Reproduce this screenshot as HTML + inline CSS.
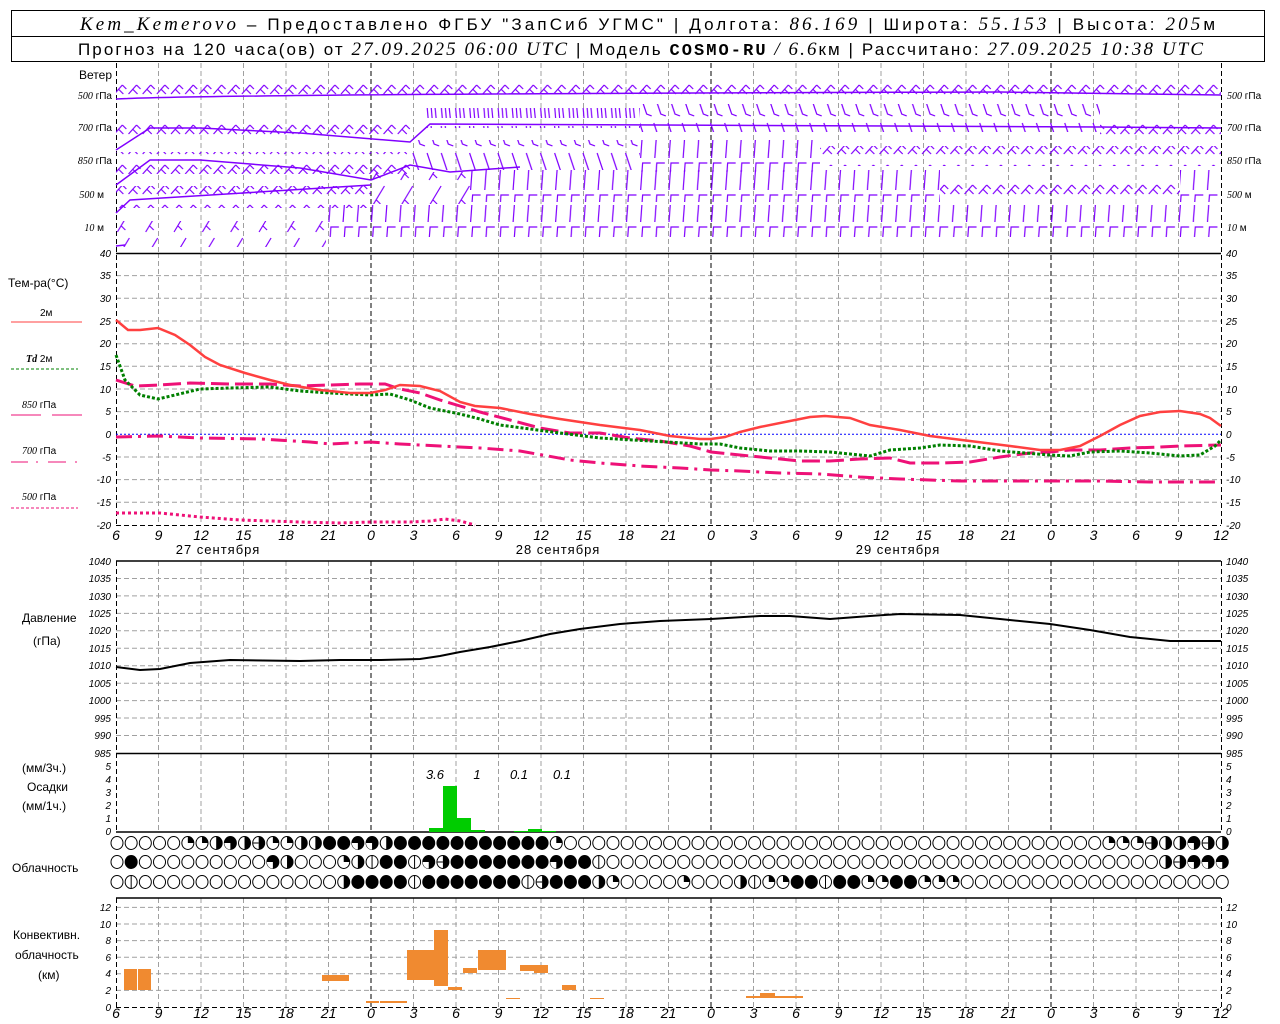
<!DOCTYPE html>
<html><head><meta charset="utf-8"><style>
html,body{margin:0;padding:0;background:#fff;width:1280px;height:1024px;overflow:hidden}
svg{display:block}
text{font-family:"Liberation Sans",sans-serif;fill:#000}
.s{font-size:12px}
.it{font-family:"Liberation Serif",serif;font-style:italic}
.tk{font-size:10px;font-family:"Liberation Serif",serif;font-style:italic}
.ax{font-size:14px;font-family:"Liberation Serif",serif;font-style:italic}
.h{font-size:17px}
</style></head><body>
<svg width="1280" height="1024" viewBox="0 0 1280 1024" xmlns="http://www.w3.org/2000/svg">
<defs>
<pattern id="pz" patternUnits="userSpaceOnUse" width="14.17" height="20" x="0" y="0">
<path d="M1,14 L9,5 M5,9 L10,14 M9,5 L13,9" stroke="#8000ff" stroke-width="1.2" fill="none"/>
</pattern>
<pattern id="pc" patternUnits="userSpaceOnUse" width="14.17" height="20" x="0" y="0">
<path d="M3,18 L2,6 M7,18 L6,6 M11,18 L10,8" stroke="#8000ff" stroke-width="1.2" fill="none"/>
</pattern>
<pattern id="pb" patternUnits="userSpaceOnUse" width="14.17" height="30" x="0" y="0">
<path d="M2,3 L9,24 L14,26" stroke="#8000ff" stroke-width="1.2" fill="none"/>
</pattern>
<pattern id="pg" patternUnits="userSpaceOnUse" width="14.17" height="32" x="0" y="0">
<path d="M3,30 L5,3 L13,3" stroke="#8000ff" stroke-width="1.2" fill="none"/>
</pattern>
<pattern id="ps" patternUnits="userSpaceOnUse" width="28.34" height="26" x="0" y="0">
<path d="M4,24 L16,4 M8,18 L12,22" stroke="#8000ff" stroke-width="1.2" fill="none"/>
</pattern>
<g id="co"><ellipse rx="6" ry="6.5" fill="#fff" stroke="#000" stroke-width="1"/></g>
<g id="cf"><ellipse rx="6" ry="6.5" fill="#000" stroke="#000" stroke-width="1"/></g>
<g id="ch"><ellipse rx="6" ry="6.5" fill="#fff" stroke="#000" stroke-width="1"/><path d="M0,-6.5 A6,6.5 0 0 1 0,6.5 Z" fill="#000"/></g>
<g id="cq"><ellipse rx="6" ry="6.5" fill="#fff" stroke="#000" stroke-width="1"/><path d="M0,0 L0,-6.5 A6,6.5 0 0 1 6,0 Z" fill="#000"/></g>
<g id="ct"><ellipse rx="6" ry="6.5" fill="#000" stroke="#000" stroke-width="1"/><path d="M0,0 L-6,0 A6,6.5 0 0 0 0,6.5 Z" fill="#fff"/></g>
<g id="cv"><ellipse rx="6" ry="6.5" fill="#fff" stroke="#000" stroke-width="1"/><path d="M0,-6.5 V6.5" stroke="#000"/></g>
<g id="cm"><ellipse rx="6" ry="6.5" fill="#fff" stroke="#000" stroke-width="1"/><path d="M0,-6.5 A6,6.5 0 0 1 0,6.5 Z" fill="#000"/><path d="M-6,0 H0" stroke="#000"/></g>
</defs>

<!-- header -->
<rect x="11.5" y="10.5" width="1253" height="51" fill="none" stroke="#000"/>
<line x1="11" y1="36.5" x2="1265" y2="36.5" stroke="#000"/>
<text x="80" y="30" textLength="1135" lengthAdjust="spacing" class="h"><tspan class="it" font-size="19">Kem_Kemerovo</tspan> – Предоставлено ФГБУ "ЗапСиб УГМС" | Долгота: <tspan class="it" font-size="19">86.169</tspan> | Широта: <tspan class="it" font-size="19">55.153</tspan> | Высота: <tspan class="it" font-size="19">205</tspan>м</text>
<text x="78" y="55" textLength="1125" lengthAdjust="spacing" class="h">Прогноз на 120 часа(ов) от <tspan class="it" font-size="19">27.09.2025 06:00 UTC</tspan>  | Модель <tspan font-family="Liberation Mono" font-weight="bold">COSMO-RU</tspan> <tspan class="it" font-size="19">/ 6.6</tspan>км | Рассчитано: <tspan class="it" font-size="19">27.09.2025 10:38 UTC</tspan></text>

<!-- vertical grid -->
<g stroke="#a0a0a0" stroke-dasharray="5,3" stroke-width="1">
<path d="M158.5,63V253M201,63V253M243.5,63V253M286,63V253M328.5,63V253M413.5,63V253M456,63V253M498.5,63V253M541,63V253M583.5,63V253M626,63V253M668.5,63V253M753.5,63V253M796,63V253M838.5,63V253M881,63V253M923.5,63V253M966,63V253M1008.5,63V253M1093.5,63V253M1136,63V253M1178.5,63V253"/>
<path d="M158.5,253V525M201,253V525M243.5,253V525M286,253V525M328.5,253V525M413.5,253V525M456,253V525M498.5,253V525M541,253V525M583.5,253V525M626,253V525M668.5,253V525M753.5,253V525M796,253V525M838.5,253V525M881,253V525M923.5,253V525M966,253V525M1008.5,253V525M1093.5,253V525M1136,253V525M1178.5,253V525"/>
<path d="M158.5,561V832M201,561V832M243.5,561V832M286,561V832M328.5,561V832M413.5,561V832M456,561V832M498.5,561V832M541,561V832M583.5,561V832M626,561V832M668.5,561V832M753.5,561V832M796,561V832M838.5,561V832M881,561V832M923.5,561V832M966,561V832M1008.5,561V832M1093.5,561V832M1136,561V832M1178.5,561V832"/>
<path d="M158.5,898V1007M201,898V1007M243.5,898V1007M286,898V1007M328.5,898V1007M413.5,898V1007M456,898V1007M498.5,898V1007M541,898V1007M583.5,898V1007M626,898V1007M668.5,898V1007M753.5,898V1007M796,898V1007M838.5,898V1007M881,898V1007M923.5,898V1007M966,898V1007M1008.5,898V1007M1093.5,898V1007M1136,898V1007M1178.5,898V1007"/>
<path d="M116,275.6H1221M116,298.3H1221M116,321H1221M116,343.7H1221M116,366.3H1221M116,389H1221M116,411.6H1221M116,457H1221M116,479.6H1221M116,502.3H1221"/>
<path d="M116,578.5H1221M116,595.9H1221M116,613.4H1221M116,630.8H1221M116,648.3H1221M116,665.7H1221M116,683.2H1221M116,700.6H1221M116,718H1221M116,735.5H1221"/>
<path d="M116,990.4H1221M116,973.8H1221M116,957.2H1221M116,940.6H1221M116,924H1221M116,907.4H1221"/>
</g>
<g stroke="#000" stroke-dasharray="5,3" stroke-width="1">
<path d="M371,63V525M711,63V525M1051,63V525M371,561V832M711,561V832M1051,561V832M371,898V1007M711,898V1007M1051,898V1007"/>
<path d="M116.5,63V525M1221.5,63V525M116.5,561V832M1221.5,561V832M116.5,898V1007M1221.5,898V1007M116,525.5H1221M116,1007.5H1221"/>
</g>
<g stroke="#000" stroke-width="1.5">
<path d="M116,253.5H1221M116,561H1221M116,753.5H1221M116,832H1221M116,898H1221"/>
</g>
<line x1="116" y1="434.3" x2="1221" y2="434.3" stroke="#0000ff" stroke-dasharray="2,2"/>

<!-- wind -->
<g>
<rect x="116" y="84" width="1105" height="20" fill="url(#pz)"/>
<path d="M116,99 C200,95 600,93 1000,92 L1221,95" stroke="#8000ff" fill="none" stroke-width="1.5"/>
<rect x="116" y="120" width="295" height="22" fill="url(#pz)"/>
<path d="M116,150 L150,128 L200,128 L300,133 L410,142 L430,124 L1100,127 L1221,128" stroke="#8000ff" fill="none" stroke-width="1.5"/>
<rect x="425" y="108" width="215" height="20" fill="url(#pc)"/>
<rect x="640" y="104" width="460" height="28" fill="url(#pb)"/>
<rect x="1100" y="118" width="121" height="20" fill="url(#pz)"/>
<rect x="116" y="152" width="295" height="22" fill="url(#pz)"/>
<path d="M116,185 L150,160 L200,160 L300,168 L371,180 L410,165 L450,172 L520,167" stroke="#8000ff" fill="none" stroke-width="1.5"/>
<rect x="411" y="140" width="229" height="30" fill="url(#pb)"/>
<rect x="640" y="140" width="180" height="32" fill="url(#pg)"/>
<rect x="820" y="146" width="401" height="20" fill="url(#pz)"/>
<rect x="116" y="186" width="255" height="22" fill="url(#pz)"/>
<path d="M116,213 L130,200 L371,185" stroke="#8000ff" fill="none" stroke-width="1.5"/>
<rect x="371" y="172" width="100" height="32" fill="url(#ps)"/>
<rect x="470" y="170" width="470" height="32" fill="url(#pg)"/>
<rect x="940" y="178" width="240" height="20" fill="url(#pz)"/>
<rect x="1180" y="170" width="41" height="32" fill="url(#pg)"/>
<rect x="116" y="221" width="210" height="26" fill="url(#ps)"/>
<path d="M116,246 L125,245" stroke="#8000ff" stroke-width="1.5"/>
<rect x="326" y="205" width="895" height="32" fill="url(#pg)"/>
</g>

<!-- wind labels -->
<text x="112" y="79" text-anchor="end" class="s" font-size="11">Ветер</text>
<g font-size="10">
<text x="112" y="99" text-anchor="end"><tspan class="it">500</tspan> гПа</text>
<text x="112" y="131" text-anchor="end"><tspan class="it">700</tspan> гПа</text>
<text x="112" y="164" text-anchor="end"><tspan class="it">850</tspan> гПа</text>
<text x="104" y="198" text-anchor="end"><tspan class="it">500</tspan> м</text>
<text x="104" y="231" text-anchor="end"><tspan class="it">10</tspan>   м</text>
<text x="1227" y="99"><tspan class="it">500</tspan> гПа</text>
<text x="1227" y="131"><tspan class="it">700</tspan> гПа</text>
<text x="1227" y="164"><tspan class="it">850</tspan> гПа</text>
<text x="1227" y="198"><tspan class="it">500</tspan> м</text>
<text x="1227" y="231"><tspan class="it">10</tspan>   м</text>
</g>

<!-- temperature legend -->
<text x="8" y="287" class="s">Тем-ра(°C)</text>
<text x="40" y="316" font-size="10">2м</text>
<line x1="11" y1="322" x2="82" y2="322" stroke="#ff4040"/>
<text x="26" y="362" font-size="10"><tspan class="it" font-weight="bold">Td</tspan>   2м</text>
<line x1="11" y1="369" x2="78" y2="369" stroke="#008000" stroke-dasharray="3,2"/>
<text x="22" y="408" font-size="10"><tspan class="it">850</tspan>  гПа</text>
<path d="M11,415H41M52,415H82" stroke="#ee1177"/>
<text x="22" y="454" font-size="10"><tspan class="it">700</tspan>  гПа</text>
<path d="M11,462H28M36,462H38M48,462H66M75,462H77" stroke="#ee1177"/>
<text x="22" y="500" font-size="10"><tspan class="it">500</tspan>  гПа</text>
<line x1="11" y1="508" x2="78" y2="508" stroke="#ee1177" stroke-dasharray="3,2"/>

<g class="tk" text-anchor="end">
<text x="111" y="257">40</text><text x="111" y="279">35</text><text x="111" y="302">30</text><text x="111" y="325">25</text><text x="111" y="347">20</text><text x="111" y="370">15</text><text x="111" y="393">10</text><text x="111" y="415">5</text><text x="111" y="438">0</text><text x="111" y="461">-5</text><text x="111" y="483">-10</text><text x="111" y="506">-15</text><text x="111" y="529">-20</text>
</g>
<g class="tk">
<text x="1226" y="257">40</text><text x="1226" y="279">35</text><text x="1226" y="302">30</text><text x="1226" y="325">25</text><text x="1226" y="347">20</text><text x="1226" y="370">15</text><text x="1226" y="393">10</text><text x="1226" y="415">5</text><text x="1226" y="438">0</text><text x="1226" y="461">-5</text><text x="1226" y="483">-10</text><text x="1226" y="506">-15</text><text x="1226" y="529">-20</text>
</g>

<polyline fill="none" stroke="#ee1177" stroke-width="3" stroke-dasharray="3,3" points="116,513 160,513 200,517 240,520 300,522 340,523 371,522 410,522 430,521 445,519 460,521 475,525"/>
<polyline fill="none" stroke="#ee1177" stroke-width="3" stroke-dasharray="16,6,3,6" points="116,437 160,436 200,438 260,439 310,442 330,444 370,442 400,444 440,446 480,448 520,451 570,460 600,463 640,466 680,468 711,470 740,471 780,473 820,474 860,477 900,479 960,481 1000,481 1050,481 1100,481 1150,482 1221,482"/>
<polyline fill="none" stroke="#ee1177" stroke-width="3" stroke-dasharray="18,6" points="116,380 135,386 160,385 190,383 230,384 270,384 300,386 330,385 360,384 385,384 400,389 420,393 440,400 460,406 480,412 510,420 540,428 570,433 600,433 630,438 660,441 690,446 711,452 740,455 770,458 800,461 830,461 860,459 890,458 910,463 940,463 970,462 1000,457 1030,453 1050,452 1070,450 1100,450 1130,448 1160,447 1180,446 1221,445"/>
<polyline fill="none" stroke="#008000" stroke-width="3" stroke-dasharray="3,2" points="116,355 125,380 140,395 158,399 175,395 200,389 230,388 270,387 300,391 330,393 370,395 390,394 410,400 430,408 460,414 480,419 500,425 530,429 560,433 600,438 650,441 700,444 720,444 740,448 770,451 800,451 830,452 850,454 870,456 890,450 920,448 940,445 970,446 1000,451 1050,455 1070,456 1090,452 1120,451 1150,453 1180,456 1200,455 1215,446 1221,440"/>
<polyline fill="none" stroke="#ff4040" stroke-width="2.5" points="116,320 128,330 140,330 158,328 175,335 190,345 205,357 220,365 245,373 270,380 290,385 320,390 350,393 370,393 385,390 400,385 420,386 440,391 460,402 475,406 500,408 530,414 560,419 600,425 640,430 670,436 700,439 711,439 725,437 740,432 760,427 790,421 810,417 825,416 850,418 870,425 900,430 930,436 970,441 1010,446 1040,450 1060,450 1080,446 1100,436 1120,425 1140,416 1160,412 1180,411 1200,414 1210,418 1221,426"/>

<g class="ax" text-anchor="middle">
<text x="116" y="540">6</text><text x="158.5" y="540">9</text><text x="201" y="540">12</text><text x="243.5" y="540">15</text><text x="286" y="540">18</text><text x="328.5" y="540">21</text><text x="371" y="540">0</text><text x="413.5" y="540">3</text><text x="456" y="540">6</text><text x="498.5" y="540">9</text><text x="541" y="540">12</text><text x="583.5" y="540">15</text><text x="626" y="540">18</text><text x="668.5" y="540">21</text><text x="711" y="540">0</text><text x="753.5" y="540">3</text><text x="796" y="540">6</text><text x="838.5" y="540">9</text><text x="881" y="540">12</text><text x="923.5" y="540">15</text><text x="966" y="540">18</text><text x="1008.5" y="540">21</text><text x="1051" y="540">0</text><text x="1093.5" y="540">3</text><text x="1136" y="540">6</text><text x="1178.5" y="540">9</text><text x="1221" y="540">12</text>
</g>
<g class="ax" text-anchor="middle">
<text x="116" y="1018">6</text><text x="158.5" y="1018">9</text><text x="201" y="1018">12</text><text x="243.5" y="1018">15</text><text x="286" y="1018">18</text><text x="328.5" y="1018">21</text><text x="371" y="1018">0</text><text x="413.5" y="1018">3</text><text x="456" y="1018">6</text><text x="498.5" y="1018">9</text><text x="541" y="1018">12</text><text x="583.5" y="1018">15</text><text x="626" y="1018">18</text><text x="668.5" y="1018">21</text><text x="711" y="1018">0</text><text x="753.5" y="1018">3</text><text x="796" y="1018">6</text><text x="838.5" y="1018">9</text><text x="881" y="1018">12</text><text x="923.5" y="1018">15</text><text x="966" y="1018">18</text><text x="1008.5" y="1018">21</text><text x="1051" y="1018">0</text><text x="1093.5" y="1018">3</text><text x="1136" y="1018">6</text><text x="1178.5" y="1018">9</text><text x="1221" y="1018">12</text>
</g>
<g font-size="13" text-anchor="middle">
<text x="218" y="554" letter-spacing="1">27 сентября</text><text x="558" y="554" letter-spacing="1">28 сентября</text><text x="898" y="554" letter-spacing="1">29 сентября</text>
</g>

<text x="22" y="622" class="s">Давление</text>
<text x="33" y="645" class="s">(гПа)</text>
<g class="tk" text-anchor="end">
<text x="111" y="565">1040</text><text x="111" y="582">1035</text><text x="111" y="600">1030</text><text x="111" y="617">1025</text><text x="111" y="634">1020</text><text x="111" y="652">1015</text><text x="111" y="669">1010</text><text x="111" y="687">1005</text><text x="111" y="704">1000</text><text x="111" y="722">995</text><text x="111" y="739">990</text><text x="111" y="757">985</text>
</g>
<g class="tk">
<text x="1226" y="565">1040</text><text x="1226" y="582">1035</text><text x="1226" y="600">1030</text><text x="1226" y="617">1025</text><text x="1226" y="634">1020</text><text x="1226" y="652">1015</text><text x="1226" y="669">1010</text><text x="1226" y="687">1005</text><text x="1226" y="704">1000</text><text x="1226" y="722">995</text><text x="1226" y="739">990</text><text x="1226" y="757">985</text>
</g>
<polyline fill="none" stroke="#000" stroke-width="2" points="116,667 140,670 160,669 190,663 230,660 300,661 340,660 380,660 420,659 440,656 460,652 490,647 520,641 550,634 580,629 620,624 660,621 711,619 760,616 790,616 830,619 870,616 900,614 960,615 1000,619 1050,624 1090,630 1130,637 1170,641 1221,641"/>

<text x="22" y="772" class="s">(мм/3ч.)</text>
<text x="27" y="791" class="s">Осадки</text>
<text x="22" y="810" class="s">(мм/1ч.)</text>
<g class="tk" text-anchor="end">
<text x="111" y="770">5</text><text x="111" y="783">4</text><text x="111" y="796">3</text><text x="111" y="809">2</text><text x="111" y="822">1</text><text x="111" y="835">0</text>
</g>
<g class="tk">
<text x="1226" y="770">5</text><text x="1226" y="783">4</text><text x="1226" y="796">3</text><text x="1226" y="809">2</text><text x="1226" y="822">1</text><text x="1226" y="835">0</text>
</g>
<g fill="#00cc00">
<rect x="429" y="828" width="14" height="4"/>
<rect x="443" y="786" width="14" height="46"/>
<rect x="457" y="818" width="14" height="14"/>
<rect x="471" y="830" width="14" height="2"/>
<rect x="514" y="831" width="14" height="1"/>
<rect x="528" y="829" width="14" height="3"/>
<rect x="542" y="831" width="14" height="1"/>
</g>
<g class="it" font-size="13" text-anchor="middle">
<text x="435" y="779">3.6</text><text x="477" y="779">1</text><text x="519" y="779">0.1</text><text x="562" y="779">0.1</text>
</g>

<text x="12" y="872" class="s">Облачность</text>
<g>
<use href="#co" x="117" y="843"/><use href="#co" x="131.17" y="843"/><use href="#co" x="145.34" y="843"/><use href="#co" x="159.51" y="843"/><use href="#co" x="173.68" y="843"/><use href="#cq" x="187.85" y="843"/><use href="#cq" x="202.02" y="843"/><use href="#ch" x="216.19" y="843"/><use href="#ct" x="230.36" y="843"/><use href="#ch" x="244.53" y="843"/><use href="#cm" x="258.7" y="843"/><use href="#cq" x="272.87" y="843"/><use href="#cq" x="287.04" y="843"/><use href="#ch" x="301.21" y="843"/><use href="#ch" x="315.38" y="843"/><use href="#cf" x="329.55" y="843"/><use href="#cf" x="343.72" y="843"/><use href="#ct" x="357.89" y="843"/><use href="#ct" x="372.06" y="843"/><use href="#ch" x="386.23" y="843"/><use href="#cf" x="400.4" y="843"/><use href="#cf" x="414.57" y="843"/><use href="#cf" x="428.74" y="843"/><use href="#cf" x="442.91" y="843"/><use href="#cf" x="457.08" y="843"/><use href="#cf" x="471.25" y="843"/><use href="#cf" x="485.42" y="843"/><use href="#cf" x="499.59" y="843"/><use href="#cf" x="513.76" y="843"/><use href="#cf" x="527.93" y="843"/><use href="#cf" x="542.1" y="843"/><use href="#cq" x="556.27" y="843"/>
<use href="#co" x="570.44" y="843"/><use href="#co" x="584.61" y="843"/><use href="#co" x="598.78" y="843"/><use href="#co" x="612.95" y="843"/><use href="#co" x="627.12" y="843"/><use href="#co" x="641.29" y="843"/><use href="#co" x="655.46" y="843"/><use href="#co" x="669.63" y="843"/><use href="#co" x="683.8" y="843"/><use href="#co" x="697.97" y="843"/><use href="#co" x="712.14" y="843"/><use href="#co" x="726.31" y="843"/><use href="#co" x="740.48" y="843"/><use href="#co" x="754.65" y="843"/><use href="#co" x="768.82" y="843"/><use href="#co" x="782.99" y="843"/><use href="#co" x="797.16" y="843"/><use href="#co" x="811.33" y="843"/><use href="#co" x="825.5" y="843"/><use href="#co" x="839.67" y="843"/><use href="#co" x="853.84" y="843"/><use href="#co" x="868.01" y="843"/><use href="#co" x="882.18" y="843"/><use href="#co" x="896.35" y="843"/><use href="#co" x="910.52" y="843"/><use href="#co" x="924.69" y="843"/><use href="#co" x="938.86" y="843"/><use href="#co" x="953.03" y="843"/><use href="#co" x="967.2" y="843"/><use href="#co" x="981.37" y="843"/><use href="#co" x="995.54" y="843"/><use href="#co" x="1009.71" y="843"/><use href="#co" x="1023.88" y="843"/><use href="#co" x="1038.05" y="843"/><use href="#co" x="1052.22" y="843"/><use href="#co" x="1066.39" y="843"/><use href="#co" x="1080.56" y="843"/><use href="#co" x="1094.73" y="843"/>
<use href="#cq" x="1108.9" y="843"/><use href="#cq" x="1123.07" y="843"/><use href="#cq" x="1137.24" y="843"/><use href="#cm" x="1151.41" y="843"/><use href="#ch" x="1165.58" y="843"/><use href="#ch" x="1179.75" y="843"/><use href="#ct" x="1193.92" y="843"/><use href="#cm" x="1208.09" y="843"/><use href="#ch" x="1222.26" y="843"/>
</g>
<g>
<use href="#co" x="117" y="862"/><use href="#cf" x="131.17" y="862"/><use href="#co" x="145.34" y="862"/><use href="#co" x="159.51" y="862"/><use href="#co" x="173.68" y="862"/><use href="#co" x="187.85" y="862"/><use href="#co" x="202.02" y="862"/><use href="#co" x="216.19" y="862"/><use href="#co" x="230.36" y="862"/><use href="#co" x="244.53" y="862"/><use href="#co" x="258.7" y="862"/><use href="#ct" x="272.87" y="862"/><use href="#ch" x="287.04" y="862"/><use href="#co" x="301.21" y="862"/><use href="#co" x="315.38" y="862"/><use href="#co" x="329.55" y="862"/><use href="#cq" x="343.72" y="862"/><use href="#ch" x="357.89" y="862"/><use href="#cv" x="372.06" y="862"/><use href="#cf" x="386.23" y="862"/><use href="#cf" x="400.4" y="862"/><use href="#cv" x="414.57" y="862"/><use href="#ct" x="428.74" y="862"/><use href="#cm" x="442.91" y="862"/>
<use href="#cf" x="457.08" y="862"/><use href="#cf" x="471.25" y="862"/><use href="#cf" x="485.42" y="862"/><use href="#cf" x="499.59" y="862"/><use href="#cf" x="513.76" y="862"/><use href="#cf" x="527.93" y="862"/><use href="#cf" x="542.1" y="862"/><use href="#ct" x="556.27" y="862"/><use href="#cf" x="570.44" y="862"/><use href="#cf" x="584.61" y="862"/><use href="#cv" x="598.78" y="862"/>
<use href="#co" x="612.95" y="862"/><use href="#co" x="627.12" y="862"/><use href="#co" x="641.29" y="862"/><use href="#co" x="655.46" y="862"/><use href="#co" x="669.63" y="862"/><use href="#co" x="683.8" y="862"/><use href="#co" x="697.97" y="862"/><use href="#co" x="712.14" y="862"/><use href="#co" x="726.31" y="862"/><use href="#co" x="740.48" y="862"/><use href="#co" x="754.65" y="862"/><use href="#co" x="768.82" y="862"/><use href="#co" x="782.99" y="862"/><use href="#co" x="797.16" y="862"/><use href="#co" x="811.33" y="862"/><use href="#co" x="825.5" y="862"/><use href="#co" x="839.67" y="862"/><use href="#co" x="853.84" y="862"/><use href="#co" x="868.01" y="862"/><use href="#co" x="882.18" y="862"/><use href="#co" x="896.35" y="862"/><use href="#co" x="910.52" y="862"/><use href="#co" x="924.69" y="862"/><use href="#co" x="938.86" y="862"/><use href="#co" x="953.03" y="862"/><use href="#co" x="967.2" y="862"/><use href="#co" x="981.37" y="862"/><use href="#co" x="995.54" y="862"/><use href="#co" x="1009.71" y="862"/><use href="#co" x="1023.88" y="862"/><use href="#co" x="1038.05" y="862"/><use href="#co" x="1052.22" y="862"/><use href="#co" x="1066.39" y="862"/><use href="#co" x="1080.56" y="862"/><use href="#co" x="1094.73" y="862"/><use href="#co" x="1108.9" y="862"/><use href="#co" x="1123.07" y="862"/><use href="#co" x="1137.24" y="862"/><use href="#co" x="1151.41" y="862"/>
<use href="#ch" x="1165.58" y="862"/><use href="#cm" x="1179.75" y="862"/><use href="#ct" x="1193.92" y="862"/><use href="#ct" x="1208.09" y="862"/><use href="#ct" x="1222.26" y="862"/>
</g>
<g>
<use href="#co" x="117" y="882"/><use href="#cv" x="131.17" y="882"/><use href="#co" x="145.34" y="882"/><use href="#co" x="159.51" y="882"/><use href="#co" x="173.68" y="882"/><use href="#co" x="187.85" y="882"/><use href="#co" x="202.02" y="882"/><use href="#co" x="216.19" y="882"/><use href="#co" x="230.36" y="882"/><use href="#co" x="244.53" y="882"/><use href="#co" x="258.7" y="882"/><use href="#co" x="272.87" y="882"/><use href="#co" x="287.04" y="882"/><use href="#co" x="301.21" y="882"/><use href="#co" x="315.38" y="882"/><use href="#co" x="329.55" y="882"/>
<use href="#ch" x="343.72" y="882"/><use href="#cf" x="357.89" y="882"/><use href="#cf" x="372.06" y="882"/><use href="#cf" x="386.23" y="882"/><use href="#cf" x="400.4" y="882"/><use href="#cv" x="414.57" y="882"/><use href="#cf" x="428.74" y="882"/><use href="#cf" x="442.91" y="882"/><use href="#cf" x="457.08" y="882"/><use href="#cf" x="471.25" y="882"/><use href="#cf" x="485.42" y="882"/><use href="#cf" x="499.59" y="882"/><use href="#cf" x="513.76" y="882"/><use href="#cv" x="527.93" y="882"/><use href="#cm" x="542.1" y="882"/><use href="#cf" x="556.27" y="882"/><use href="#cf" x="570.44" y="882"/><use href="#cf" x="584.61" y="882"/><use href="#ch" x="598.78" y="882"/><use href="#cq" x="612.95" y="882"/>
<use href="#co" x="627.12" y="882"/><use href="#co" x="641.29" y="882"/><use href="#co" x="655.46" y="882"/><use href="#co" x="669.63" y="882"/><use href="#cq" x="683.8" y="882"/><use href="#co" x="697.97" y="882"/><use href="#co" x="712.14" y="882"/><use href="#co" x="726.31" y="882"/><use href="#ch" x="740.48" y="882"/><use href="#cv" x="754.65" y="882"/><use href="#cq" x="768.82" y="882"/><use href="#cq" x="782.99" y="882"/><use href="#cf" x="797.16" y="882"/><use href="#cf" x="811.33" y="882"/><use href="#cv" x="825.5" y="882"/><use href="#cf" x="839.67" y="882"/><use href="#cf" x="853.84" y="882"/><use href="#cq" x="868.01" y="882"/><use href="#cq" x="882.18" y="882"/><use href="#cf" x="896.35" y="882"/><use href="#cf" x="910.52" y="882"/><use href="#cq" x="924.69" y="882"/><use href="#cq" x="938.86" y="882"/><use href="#cq" x="953.03" y="882"/>
<use href="#co" x="967.2" y="882"/><use href="#co" x="981.37" y="882"/><use href="#co" x="995.54" y="882"/><use href="#co" x="1009.71" y="882"/><use href="#co" x="1023.88" y="882"/><use href="#co" x="1038.05" y="882"/><use href="#co" x="1052.22" y="882"/><use href="#co" x="1066.39" y="882"/><use href="#co" x="1080.56" y="882"/><use href="#co" x="1094.73" y="882"/><use href="#co" x="1108.9" y="882"/><use href="#co" x="1123.07" y="882"/><use href="#co" x="1137.24" y="882"/><use href="#co" x="1151.41" y="882"/><use href="#co" x="1165.58" y="882"/><use href="#co" x="1179.75" y="882"/><use href="#co" x="1193.92" y="882"/><use href="#co" x="1208.09" y="882"/><use href="#co" x="1222.26" y="882"/>
</g>

<text x="13" y="939" class="s">Конвективн.</text>
<text x="15" y="959" class="s">облачность</text>
<text x="38" y="979" class="s">(км)</text>
<g class="tk" text-anchor="end">
<text x="111" y="911">12</text><text x="111" y="928">10</text><text x="111" y="944">8</text><text x="111" y="961">6</text><text x="111" y="977">4</text><text x="111" y="994">2</text><text x="111" y="1011">0</text>
</g>
<g class="tk">
<text x="1226" y="911">12</text><text x="1226" y="928">10</text><text x="1226" y="944">8</text><text x="1226" y="961">6</text><text x="1226" y="977">4</text><text x="1226" y="994">2</text><text x="1226" y="1011">0</text>
</g>
<g fill="#f08a30">
<rect x="124" y="969" width="13" height="21"/><rect x="138" y="969" width="13" height="21"/>
<rect x="322" y="975" width="27" height="6"/>
<rect x="366" y="1001" width="13" height="2"/><rect x="380" y="1001" width="27" height="2"/>
<rect x="407" y="950" width="27" height="30"/>
<rect x="434" y="930" width="14" height="56"/>
<rect x="448" y="987" width="14" height="3"/>
<rect x="463" y="968" width="14" height="5"/>
<rect x="478" y="950" width="28" height="20"/>
<rect x="506" y="998" width="14" height="1"/>
<rect x="520" y="965" width="14" height="6"/>
<rect x="534" y="965" width="14" height="8"/>
<rect x="562" y="985" width="14" height="5"/>
<rect x="590" y="998" width="14" height="1"/>
<rect x="746" y="996" width="14" height="2"/>
<rect x="760" y="993" width="15" height="5"/>
<rect x="775" y="996" width="28" height="2"/>
</g>
</svg>
</body></html>
